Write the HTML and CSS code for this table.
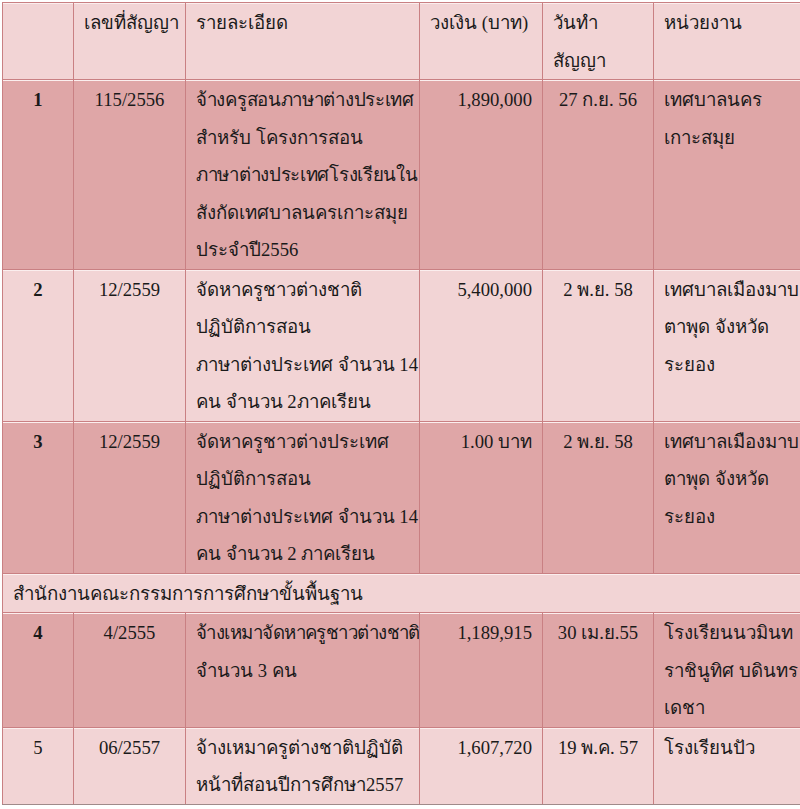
FILE: index.html
```html
<!DOCTYPE html>
<html lang="th">
<head>
<meta charset="utf-8">
<title>สัญญาจ้างครูต่างชาติ</title>
<link rel="stylesheet" href="styles.css">
</head>
<body>
<table class="contracts">
  <colgroup>
    <col class="c-no"><col class="c-id"><col class="c-desc"><col class="c-amt"><col class="c-date"><col class="c-org">
  </colgroup>
  <tr class="light">
    <td></td>
    <td class="left">เลขที่สัญญา</td>
    <td class="left">รายละเอียด</td>
    <td class="left">วงเงิน (บาท)</td>
    <td class="left hdate">วันทำ<br>สัญญา</td>
    <td class="left">หน่วยงาน</td>
  </tr>
  <tr class="dark">
    <td class="no bold">1</td>
    <td class="center">115/2556</td>
    <td class="left desc"><span class="tight">จ้างครูสอนภาษาต่างประเทศ</span><br>สำหรับ โครงการสอน<br><span class="tight">ภาษาต่างประเทศโรงเรียนใน</span><br>สังกัดเทศบาลนครเกาะสมุย<br>ประจำปี2556</td>
    <td class="right">1,890,000</td>
    <td class="center">27 ก.ย. 56</td>
    <td class="left">เทศบาลนคร<br>เกาะสมุย</td>
  </tr>
  <tr class="light">
    <td class="no bold">2</td>
    <td class="center">12/2559</td>
    <td class="left desc">จัดหาครูชาวต่างชาติ<br>ปฏิบัติการสอน<br>ภาษาต่างประเทศ จำนวน 14<br>คน จำนวน 2ภาคเรียน</td>
    <td class="right">5,400,000</td>
    <td class="center">2 พ.ย. 58</td>
    <td class="left">เทศบาลเมืองมาบ<br>ตาพุด จังหวัด<br>ระยอง</td>
  </tr>
  <tr class="dark">
    <td class="no bold">3</td>
    <td class="center">12/2559</td>
    <td class="left desc">จัดหาครูชาวต่างประเทศ<br>ปฏิบัติการสอน<br>ภาษาต่างประเทศ จำนวน 14<br>คน จำนวน 2 ภาคเรียน</td>
    <td class="right">1.00 บาท</td>
    <td class="center">2 พ.ย. 58</td>
    <td class="left">เทศบาลเมืองมาบ<br>ตาพุด จังหวัด<br>ระยอง</td>
  </tr>
  <tr class="light section">
    <td colspan="6" class="left">สำนักงานคณะกรรมการการศึกษาขั้นพื้นฐาน</td>
  </tr>
  <tr class="dark">
    <td class="no bold">4</td>
    <td class="center">4/2555</td>
    <td class="left desc"><span class="tighter">จ้างเหมาจัดหาครูชาวต่างชาติ</span><br>จำนวน 3 คน</td>
    <td class="right">1,189,915</td>
    <td class="center">30 เม.ย.55</td>
    <td class="left">โรงเรียนนวมินท<br>ราชินูทิศ บดินทร<br>เดชา</td>
  </tr>
  <tr class="light last">
    <td class="no">5</td>
    <td class="center">06/2557</td>
    <td class="left desc">จ้างเหมาครูต่างชาติปฏิบัติ<br>หน้าที่สอนปีการศึกษา2557</td>
    <td class="right">1,607,720</td>
    <td class="center">19 พ.ค. 57</td>
    <td class="left">โรงเรียนปัว</td>
  </tr>
</table>
</body>
</html>
```

FILE: styles.css
```css
html, body {
  margin: 0;
  padding: 0;
  background: #ffffff;
  overflow: hidden;
}

.contracts {
  margin: 2px 0 0 2px;
  border-collapse: separate;
  border-spacing: 0;
  table-layout: fixed;
  width: 820px;
  font-family: "Liberation Serif", "Times New Roman", serif;
  font-size: 18.67px;
  color: #1a1a1a;
  border-bottom: 1px solid #a08a8a;
}

.c-no { width: 71px; }
.c-id { width: 112px; }
.c-desc { width: 234px; }
.c-amt { width: 123px; }
.c-date { width: 111px; }
.c-org { width: 169px; }

.contracts td {
  border-left: 1px solid #c98083;
  border-top: 1px solid #c98083;
  box-shadow: inset 0 1px 0 #fbeeee;
  padding: 1px 10px 0 10px;
  line-height: 37.5px;
  vertical-align: top;
  white-space: nowrap;
  overflow: hidden;
}

.light td { background: #f2d4d5; }
.dark td { background: #dfa6a7; }

.left { text-align: left; }
.right { text-align: right; }
.center { text-align: center; }
.no { text-align: center; padding-left: 0; padding-right: 0; }
.bold { font-weight: bold; }
.hdate { padding-left: 7px; }
.section td { padding-left: 10px; }

.contracts td.desc { padding-right: 2px; }
.tight { letter-spacing: -0.3px; }
.tighter { letter-spacing: -0.55px; }
```
